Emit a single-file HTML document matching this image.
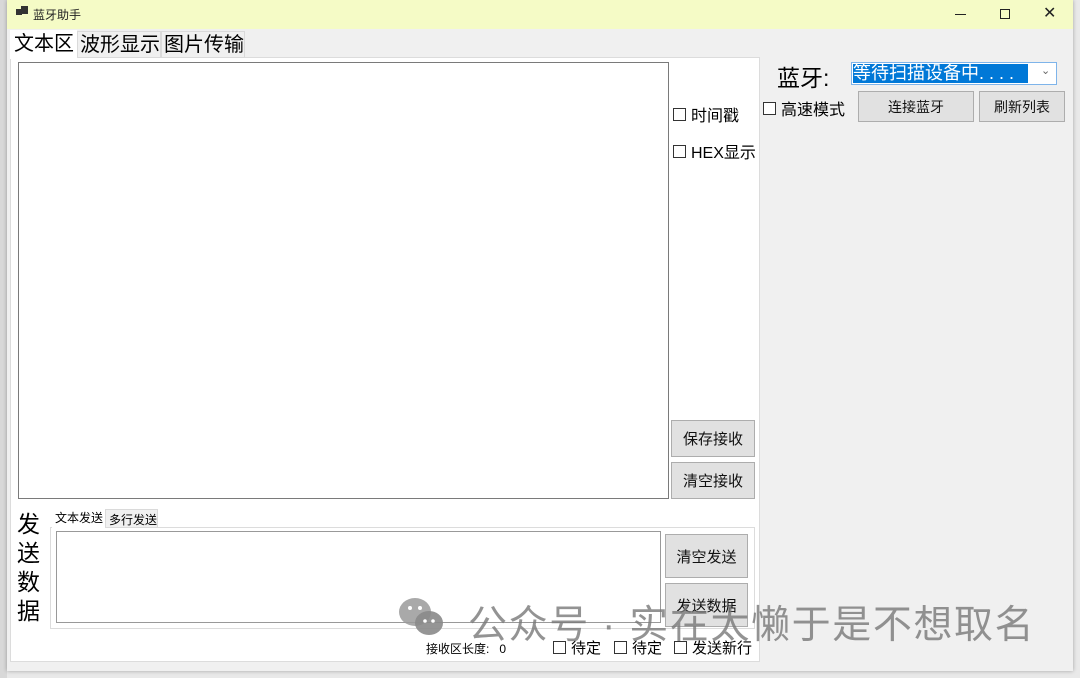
<!DOCTYPE html>
<html><head><meta charset="utf-8"><style>
*{margin:0;padding:0;box-sizing:border-box}
body{width:1080px;height:678px;overflow:hidden;background:#e9e9e9;position:relative;font-family:"Liberation Sans","Noto Sans CJK SC",sans-serif;color:#000}
.a{position:absolute}
.win{left:7px;top:0;width:1066px;height:671px;background:#f0f0f0;box-shadow:0 0 4px rgba(0,0,0,.3)}
.title{left:7px;top:0;width:1066px;height:29px;background:#f5fbc6}
.btn{position:absolute;background:#e1e1e1;border:1px solid #adadad;font-size:15px;display:flex;align-items:center;justify-content:center;color:#111}
.cb{position:absolute;display:flex;align-items:center;font-size:16px;white-space:nowrap}
.cb i{display:inline-block;width:13px;height:13px;border:1px solid #333;background:#fff;margin-right:5px}
.box{position:absolute;background:#fff;border:1px solid #7a7a7a}
</style></head><body>
<div class="a" style="left:0;top:0;width:7px;height:678px;background:#d8d8d8"></div>
<div class="a win"></div>
<div class="a title"></div>
<div class="a" style="left:16px;top:9px;width:6px;height:6px;background:#333"></div>
<div class="a" style="left:21px;top:6px;width:7px;height:8px;background:#333"></div>
<div class="a" style="left:33px;top:6px;font-size:12px;color:#222">蓝牙助手</div>
<div class="a" style="left:955px;top:14px;width:11px;height:1px;background:#222"></div>
<div class="a" style="left:1000px;top:9px;width:10px;height:10px;border:1px solid #222"></div>
<div class="a" style="left:1043px;top:3px;font-size:16px;color:#222">✕</div>
<!-- tabs -->
<div class="a" style="left:10px;top:57px;width:750px;height:605px;background:#fff;border:1px solid #dcdcdc"></div>
<div class="a" style="left:10px;top:30px;width:67px;height:29px;background:#fff;font-size:20px;line-height:28px;padding:0 0 0 4px">文本区</div>
<div class="a" style="left:77px;top:31px;width:84px;height:27px;background:#f0f0f0;border:1px solid #dadada;font-size:20px;padding:0 0 0 2px;line-height:26px">波形显示</div>
<div class="a" style="left:161px;top:31px;width:84px;height:27px;background:#f0f0f0;border:1px solid #dadada;font-size:20px;padding:0 0 0 2px;line-height:26px">图片传输</div>
<div class="box" style="left:18px;top:62px;width:651px;height:437px"></div>
<div class="cb" style="left:673px;top:102px"><i></i>时间戳</div>
<div class="cb" style="left:673px;top:139px"><i></i>HEX显示</div>
<div class="btn" style="left:671px;top:420px;width:84px;height:37px">保存接收</div>
<div class="btn" style="left:671px;top:462px;width:84px;height:37px">清空接收</div>
<!-- right -->
<div class="a" style="left:777px;top:59px;font-size:23px">蓝牙:</div>
<div class="a" style="left:851px;top:62px;width:206px;height:23px;background:#fff;border:1px solid #7eb4ea"></div>
<div class="a" style="left:853px;top:64px;width:175px;height:19px;background:#0078d7;color:#fff;font-size:18px;line-height:19px;white-space:nowrap;overflow:hidden">等待扫描设备中<span style="letter-spacing:5px">....</span></div>
<div class="a" style="left:1041px;top:64px;font-size:11px;color:#666">⌄</div>
<div class="cb" style="left:763px;top:96px"><i></i>高速模式</div>
<div class="btn" style="left:858px;top:91px;width:116px;height:31px;font-size:14px">连接蓝牙</div>
<div class="btn" style="left:979px;top:91px;width:86px;height:31px;font-size:14px">刷新列表</div>
<!-- send -->
<div class="a" style="left:17px;top:510px;font-size:23px;line-height:29px;width:26px">发<br>送<br>数<br>据</div>
<div class="a" style="left:50px;top:527px;width:705px;height:102px;border:1px solid #dcdcdc;background:#fff"></div>
<div class="a" style="left:52px;top:507px;width:53px;height:21px;background:#fff;font-size:12px;padding:2px 0 0 3px">文本发送</div>
<div class="a" style="left:105px;top:509px;width:53px;height:19px;background:#f0f0f0;border:1px solid #dadada;font-size:12px;padding:1px 0 0 3px">多行发送</div>
<div class="box" style="left:56px;top:531px;width:605px;height:92px;border-color:#999"></div>
<div class="btn" style="left:665px;top:534px;width:83px;height:44px">清空发送</div>
<div class="btn" style="left:665px;top:583px;width:83px;height:44px">发送数据</div>
<div class="a" style="left:426px;top:640px;font-size:12px">接收区长度:&nbsp;&nbsp; 0</div>
<div class="cb" style="left:553px;top:637px;font-size:15px"><i></i>待定</div>
<div class="cb" style="left:614px;top:637px;font-size:15px"><i></i>待定</div>
<div class="cb" style="left:674px;top:637px;font-size:15px"><i></i>发送新行</div>
<!-- watermark -->
<svg class="a" style="left:398px;top:596px" width="50" height="42"><ellipse cx="17" cy="16" rx="16" ry="14" fill="#9a9a9a" opacity=".85"/><ellipse cx="31" cy="27" rx="14" ry="12" fill="#8a8a8a" opacity=".9"/><circle cx="12" cy="12" r="2" fill="#fff"/><circle cx="22" cy="12" r="2" fill="#fff"/><circle cx="27" cy="25" r="1.8" fill="#fff"/><circle cx="35" cy="25" r="1.8" fill="#fff"/></svg>
<div class="a" style="left:468px;top:594px;font-size:39px;color:rgba(120,120,120,.8);white-space:nowrap;letter-spacing:1.6px">公众号 · 实在太懒于是不想取名</div>
</body></html>
